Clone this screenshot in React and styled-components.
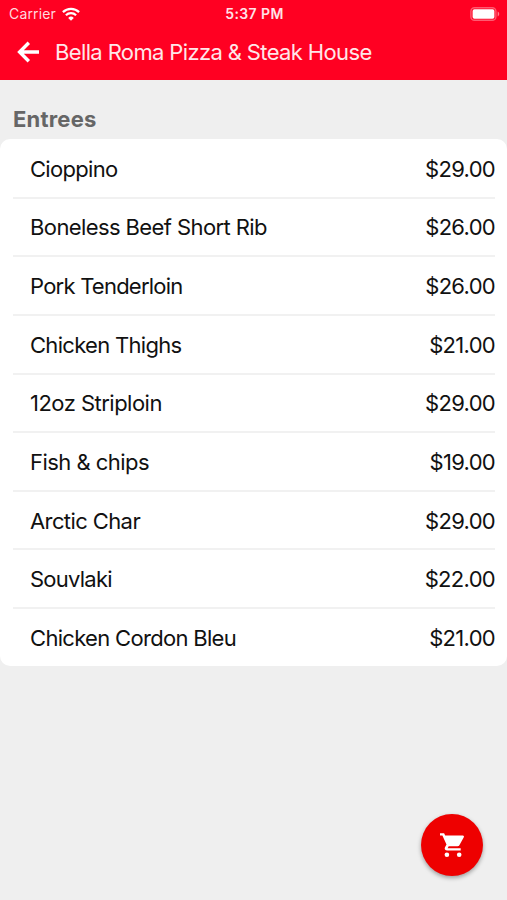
import React from "react";
import styled, { createGlobalStyle } from "styled-components";

const GlobalStyle = createGlobalStyle`
  body {
    margin: 0;
    background: #efefef;
    font-family: Inter, "Liberation Sans", sans-serif;
  }
`;

const Screen = styled.div`
  position: relative;
  height: 900px;
  background: #efefef;
  overflow: hidden;
`;

const Header = styled.header`
  height: 80px;
  background: #ff0022;
  color: #fff;
`;

const StatusBar = styled.div`
  display: grid;
  grid-template-columns: 1fr auto 1fr;
  align-items: center;
  height: 27px;
  padding: 0 7px 0 9px;
  box-sizing: border-box;
`;

const Carrier = styled.div`
  display: flex;
  align-items: center;
  gap: 6px;
  font-size: 14px;
  letter-spacing: 0.15px;
  color: #ffd9de;
`;

const Time = styled.div`
  font-size: 14px;
  font-weight: 600;
  letter-spacing: 0.4px;
  color: #ffe3e7;
`;

const BatteryIcon = styled.svg`
  justify-self: end;
`;

const TitleBar = styled.div`
  display: flex;
  align-items: center;
  height: 50px;
  padding-left: 17px;
`;

const Title = styled.h1`
  margin: 0 0 0 15px;
  font-size: 22px;
  line-height: 28px;
  font-weight: 400;
  letter-spacing: ${(props) => props.$spacing}px;
  white-space: nowrap;
  color: #ffe6e9;
`;

const SectionTitle = styled.h2`
  margin: 0;
  height: 59px;
  padding: 24px 13px 0;
  box-sizing: border-box;
  font-size: 22px;
  line-height: 30px;
  font-weight: 700;
  letter-spacing: 0.2px;
  color: #666;
`;

const Menu = styled.ul`
  margin: 0;
  padding: 1px 12px 0 13px;
  list-style: none;
  background: #fff;
  border-radius: 10px;
`;

const MenuItem = styled.li`
  display: flex;
  align-items: center;
  justify-content: space-between;
  height: 58.65px;
  padding: 1px 0 0 17px;
  box-sizing: border-box;
  border-bottom: 2px solid #f1f1f1;
  font-size: 22px;
  color: #111;

  &:last-child {
    height: 57px;
    border-bottom: 0;
  }
`;

const Name = styled.span`
  letter-spacing: ${(props) => props.$spacing}px;
`;

const Price = styled.span`
  letter-spacing: -0.7px;
`;

const CartButton = styled.button`
  position: absolute;
  left: 421px;
  top: 814px;
  display: flex;
  align-items: center;
  justify-content: center;
  width: 62px;
  height: 62px;
  padding: 0;
  border: 0;
  border-radius: 50%;
  background: #ee0000;
  color: #fff;
  box-shadow: 0 2px 4px rgba(0, 0, 0, 0.35);
`;

const entrees = [
  { name: "Cioppino", price: "$29.00", spacing: -0.7 },
  { name: "Boneless Beef Short Rib", price: "$26.00", spacing: -0.6 },
  { name: "Pork Tenderloin", price: "$26.00", spacing: -0.77 },
  { name: "Chicken Thighs", price: "$21.00", spacing: -0.7 },
  { name: "12oz Striploin", price: "$29.00", spacing: -0.52 },
  { name: "Fish & chips", price: "$19.00", spacing: -0.53 },
  { name: "Arctic Char", price: "$29.00", spacing: -0.6 },
  { name: "Souvlaki", price: "$22.00", spacing: -0.75 },
  { name: "Chicken Cordon Bleu", price: "$21.00", spacing: -0.69 },
];

const Wifi = () => (
  <svg width="18" height="14" viewBox="0 0 18 14" fill="none" stroke="#fff" strokeWidth="2.2">
    <path d="M0.9 5.1a11.6 11.6 0 0 1 16.2 0" />
    <path d="M3.9 8.2a7.3 7.3 0 0 1 10.2 0" />
    <path d="M9 13.8L6.2 10.9a4 4 0 0 1 5.6 0z" fill="#fff" stroke="none" />
  </svg>
);

const Battery = () => (
  <BatteryIcon width="30" height="14" viewBox="0 0 30 14">
    <rect x="0.9" y="0.7" width="25" height="12.6" rx="3.6" fill="none" stroke="#ff5a70" strokeWidth="1.4" />
    <rect x="2.6" y="2.3" width="21.8" height="9.4" rx="1.8" fill="#fff" />
    <path d="M27.7 4.6c2 .7 2 4.1 0 4.8z" fill="#ff8090" />
  </BatteryIcon>
);

const BackArrow = () => (
  <svg width="23" height="22" viewBox="0 0 23 22" fill="none" stroke="#fff" strokeWidth="3.4">
    <path d="M11.8 1.7L2.6 11l9.2 9.3M3 11h19" />
  </svg>
);

const Cart = () => (
  <svg width="26" height="26" viewBox="0 0 26 26" fill="#fff">
    <path d="M1 1.3h4.1l1.1 2.3h17.6c1 0 1.4.8 1 1.6l-4.3 7.8c-.4.8-1 1.2-1.9 1.2H9.7l-1.1 2.1h13.1v2.3H8.2c-2 0-3.1-1.8-2.2-3.4l1.5-2.7L3.4 3.6H1z" />
    <circle cx="7.9" cy="22.7" r="2.3" />
    <circle cx="20.2" cy="22.7" r="2.3" />
  </svg>
);

const App = () => {
  return (
    <>
      <GlobalStyle />
      <Screen>
        <Header>
          <StatusBar>
            <Carrier>
              Carrier
              <Wifi />
            </Carrier>
            <Time>5:37 PM</Time>
            <Battery />
          </StatusBar>
          <TitleBar>
            <BackArrow />
            <Title $spacing={-0.63}>Bella Roma Pizza &amp; Steak House</Title>
          </TitleBar>
        </Header>
        <SectionTitle>Entrees</SectionTitle>
        <Menu>
          {entrees.map((item) => (
            <MenuItem key={item.name}>
              <Name $spacing={item.spacing}>{item.name}</Name>
              <Price>{item.price}</Price>
            </MenuItem>
          ))}
        </Menu>
        <CartButton aria-label="Cart">
          <Cart />
        </CartButton>
      </Screen>
    </>
  );
};

export default App;
